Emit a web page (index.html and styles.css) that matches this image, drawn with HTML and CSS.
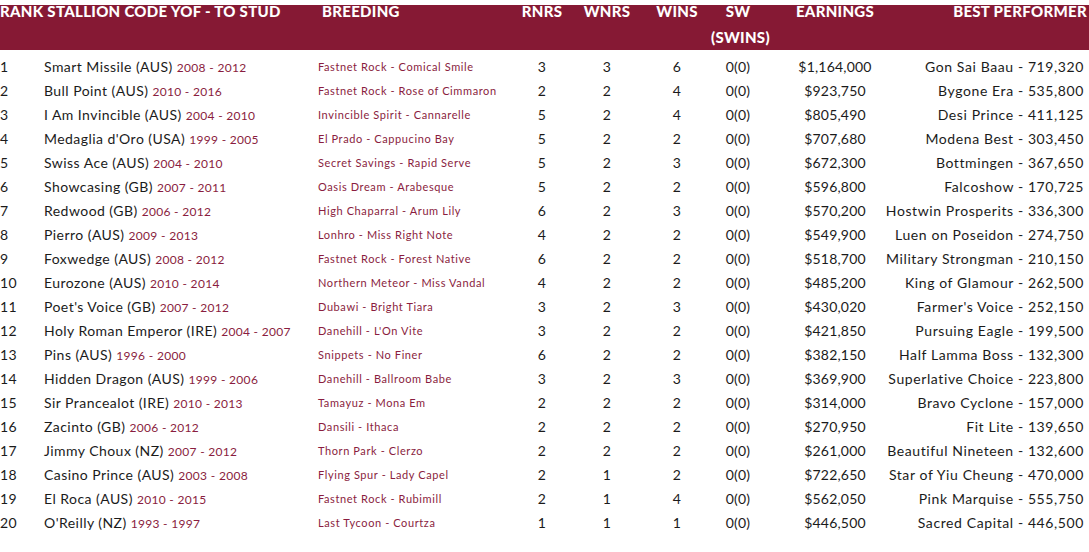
FILE: index.html
```html
<!DOCTYPE html>
<html>
<head>
<meta charset="utf-8">
<link rel="stylesheet" href="styles.css">
</head>
<body>
<div class="table">
  <div class="head">
    <div class="hc h-rank">RANK STALLION CODE YOF - TO STUD</div>
    <div class="hc h-breed">BREEDING</div>
    <div class="hc c">RNRS</div>
    <div class="hc c">WNRS</div>
    <div class="hc c">WINS</div>
    <div class="hc c">SW<span class="sub">(SWINS)</span></div>
    <div class="hc c">EARNINGS</div>
    <div class="hc h-best">BEST PERFORMER</div>
  </div>
  <div class="body">
    <div class="row"><span class="rank">1</span><span class="stal">Smart Missile (AUS) <em>2008 - 2012</em></span><span class="breed">Fastnet Rock - Comical Smile</span><span class="c">3</span><span class="c">3</span><span class="c">6</span><span class="c">0(0)</span><span class="c">$1,164,000</span><span class="best"><span>Gon Sai Baau - 719,320</span></span></div>
    <div class="row"><span class="rank">2</span><span class="stal">Bull Point (AUS) <em>2010 - 2016</em></span><span class="breed">Fastnet Rock - Rose of Cimmaron</span><span class="c">2</span><span class="c">2</span><span class="c">4</span><span class="c">0(0)</span><span class="c">$923,750</span><span class="best"><span>Bygone Era - 535,800</span></span></div>
    <div class="row"><span class="rank">3</span><span class="stal">I Am Invincible (AUS) <em>2004 - 2010</em></span><span class="breed">Invincible Spirit - Cannarelle</span><span class="c">5</span><span class="c">2</span><span class="c">4</span><span class="c">0(0)</span><span class="c">$805,490</span><span class="best"><span>Desi Prince - 411,125</span></span></div>
    <div class="row"><span class="rank">4</span><span class="stal">Medaglia d'Oro (USA) <em>1999 - 2005</em></span><span class="breed">El Prado - Cappucino Bay</span><span class="c">5</span><span class="c">2</span><span class="c">2</span><span class="c">0(0)</span><span class="c">$707,680</span><span class="best"><span>Modena Best - 303,450</span></span></div>
    <div class="row"><span class="rank">5</span><span class="stal">Swiss Ace (AUS) <em>2004 - 2010</em></span><span class="breed">Secret Savings - Rapid Serve</span><span class="c">5</span><span class="c">2</span><span class="c">3</span><span class="c">0(0)</span><span class="c">$672,300</span><span class="best"><span>Bottmingen - 367,650</span></span></div>
    <div class="row"><span class="rank">6</span><span class="stal">Showcasing (GB) <em>2007 - 2011</em></span><span class="breed">Oasis Dream - Arabesque</span><span class="c">5</span><span class="c">2</span><span class="c">2</span><span class="c">0(0)</span><span class="c">$596,800</span><span class="best"><span>Falcoshow - 170,725</span></span></div>
    <div class="row"><span class="rank">7</span><span class="stal">Redwood (GB) <em>2006 - 2012</em></span><span class="breed">High Chaparral - Arum Lily</span><span class="c">6</span><span class="c">2</span><span class="c">3</span><span class="c">0(0)</span><span class="c">$570,200</span><span class="best"><span>Hostwin Prosperits - 336,300</span></span></div>
    <div class="row"><span class="rank">8</span><span class="stal">Pierro (AUS) <em>2009 - 2013</em></span><span class="breed">Lonhro - Miss Right Note</span><span class="c">4</span><span class="c">2</span><span class="c">2</span><span class="c">0(0)</span><span class="c">$549,900</span><span class="best"><span>Luen on Poseidon - 274,750</span></span></div>
    <div class="row"><span class="rank">9</span><span class="stal">Foxwedge (AUS) <em>2008 - 2012</em></span><span class="breed">Fastnet Rock - Forest Native</span><span class="c">6</span><span class="c">2</span><span class="c">2</span><span class="c">0(0)</span><span class="c">$518,700</span><span class="best"><span>Military Strongman - 210,150</span></span></div>
    <div class="row"><span class="rank">10</span><span class="stal">Eurozone (AUS) <em>2010 - 2014</em></span><span class="breed">Northern Meteor - Miss Vandal</span><span class="c">4</span><span class="c">2</span><span class="c">2</span><span class="c">0(0)</span><span class="c">$485,200</span><span class="best"><span>King of Glamour - 262,500</span></span></div>
    <div class="row"><span class="rank">11</span><span class="stal">Poet's Voice (GB) <em>2007 - 2012</em></span><span class="breed">Dubawi - Bright Tiara</span><span class="c">3</span><span class="c">2</span><span class="c">3</span><span class="c">0(0)</span><span class="c">$430,020</span><span class="best"><span>Farmer's Voice - 252,150</span></span></div>
    <div class="row"><span class="rank">12</span><span class="stal">Holy Roman Emperor (IRE) <em>2004 - 2007</em></span><span class="breed">Danehill - L'On Vite</span><span class="c">3</span><span class="c">2</span><span class="c">2</span><span class="c">0(0)</span><span class="c">$421,850</span><span class="best"><span>Pursuing Eagle - 199,500</span></span></div>
    <div class="row"><span class="rank">13</span><span class="stal">Pins (AUS) <em>1996 - 2000</em></span><span class="breed">Snippets - No Finer</span><span class="c">6</span><span class="c">2</span><span class="c">2</span><span class="c">0(0)</span><span class="c">$382,150</span><span class="best"><span>Half Lamma Boss - 132,300</span></span></div>
    <div class="row"><span class="rank">14</span><span class="stal">Hidden Dragon (AUS) <em>1999 - 2006</em></span><span class="breed">Danehill - Ballroom Babe</span><span class="c">3</span><span class="c">2</span><span class="c">3</span><span class="c">0(0)</span><span class="c">$369,900</span><span class="best"><span>Superlative Choice - 223,800</span></span></div>
    <div class="row"><span class="rank">15</span><span class="stal">Sir Prancealot (IRE) <em>2010 - 2013</em></span><span class="breed">Tamayuz - Mona Em</span><span class="c">2</span><span class="c">2</span><span class="c">2</span><span class="c">0(0)</span><span class="c">$314,000</span><span class="best"><span>Bravo Cyclone - 157,000</span></span></div>
    <div class="row"><span class="rank">16</span><span class="stal">Zacinto (GB) <em>2006 - 2012</em></span><span class="breed">Dansili - Ithaca</span><span class="c">2</span><span class="c">2</span><span class="c">2</span><span class="c">0(0)</span><span class="c">$270,950</span><span class="best"><span>Fit Lite - 139,650</span></span></div>
    <div class="row"><span class="rank">17</span><span class="stal">Jimmy Choux (NZ) <em>2007 - 2012</em></span><span class="breed">Thorn Park - Clerzo</span><span class="c">2</span><span class="c">2</span><span class="c">2</span><span class="c">0(0)</span><span class="c">$261,000</span><span class="best"><span>Beautiful Nineteen - 132,600</span></span></div>
    <div class="row"><span class="rank">18</span><span class="stal">Casino Prince (AUS) <em>2003 - 2008</em></span><span class="breed">Flying Spur - Lady Capel</span><span class="c">2</span><span class="c">1</span><span class="c">2</span><span class="c">0(0)</span><span class="c">$722,650</span><span class="best"><span>Star of Yiu Cheung - 470,000</span></span></div>
    <div class="row"><span class="rank">19</span><span class="stal">El Roca (AUS) <em>2010 - 2015</em></span><span class="breed">Fastnet Rock - Rubimill</span><span class="c">2</span><span class="c">1</span><span class="c">4</span><span class="c">0(0)</span><span class="c">$562,050</span><span class="best"><span>Pink Marquise - 555,750</span></span></div>
    <div class="row"><span class="rank">20</span><span class="stal">O'Reilly (NZ) <em>1993 - 1997</em></span><span class="breed">Last Tycoon - Courtza</span><span class="c">1</span><span class="c">1</span><span class="c">1</span><span class="c">0(0)</span><span class="c">$446,500</span><span class="best"><span>Sacred Capital - 446,500</span></span></div>
  </div>
</div>
</body>
</html>
```

FILE: styles.css
```css
html, body {
  margin: 0;
  padding: 0;
  background: #ffffff;
}
body {
  font-family: "Lato", "Liberation Sans", sans-serif;
  color: #1b1b1b;
  width: 1089px;
  height: 552px;
  overflow: hidden;
}
.table {
  padding-top: 5px;
}
.head,
.row {
  display: grid;
  grid-template-columns: 44px 274px 195px 58px 72px 68px 54px 140px 179px;
  padding-right: 5px;
}
.head {
  background: #861934;
  color: #ffffff;
  height: 45px;
  font-weight: 900;
  font-size: 15px;
  letter-spacing: 0.3px;
  line-height: 13px;
}
.hc {
  white-space: nowrap;
}
.sub {
  display: block;
  margin-top: 13px;
}
.h-rank {
  grid-column: 1 / 3;
  padding-left: 0;
}
.h-breed {
  padding-left: 4px;
}
.h-best {
  text-align: right;
  margin-right: -3px;
}
.c {
  text-align: center;
}
.body {
  padding-top: 5px;
}
.row {
  height: 24px;
  line-height: 24px;
  font-size: 14px;
  letter-spacing: 0.45px;
  white-space: nowrap;
}
.row .c {
  letter-spacing: 0.2px;
}
.stal em {
  font-style: normal;
  font-size: 12px;
  letter-spacing: 0.3px;
  color: #8a1d40;
}
.breed {
  font-size: 11px;
  color: #8a1d40;
  letter-spacing: 0.6px;
}
.best {
  display: flex;
  justify-content: flex-end;
  letter-spacing: 0.6px;
}
.best span {
  flex: none;
}
```
